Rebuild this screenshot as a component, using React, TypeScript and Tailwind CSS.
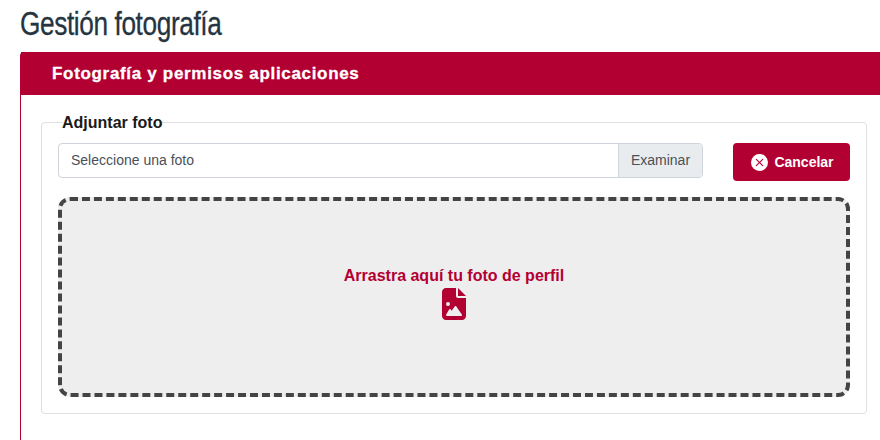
import { BsXCircleFill } from "react-icons/bs";
import { FaFileImage } from "react-icons/fa6";

export default function App() {
  return (
    <div className="h-[440px] w-[880px] overflow-hidden bg-white pl-5 font-['Liberation_Sans',Arial,sans-serif] text-[#212529]">
      <h1 className="h-[52px] origin-left scale-x-[0.795] whitespace-nowrap pt-[4px] text-[33px] leading-[40px] tracking-[-0.5px] text-[#26343f] [-webkit-text-stroke:0.3px_#26343f]">
        Gestión fotografía
      </h1>
      <div className="h-[388px] rounded-tl-[4px] border-l border-[#b30033]">
        <div className="flex h-[43px] items-center bg-[#b30033] pl-[31px] text-[17px] font-bold tracking-[0.68px] text-white [-webkit-text-stroke:0.3px_white]">
          Fotografía y permisos aplicaciones
        </div>
        <div className="pl-[20px] pr-[13px] pt-[17px]">
          <fieldset className="h-[302px] rounded-[4px] border border-[#dfdfdf] pl-4 pr-4">
            <legend className="ml-1 pt-[2px] text-base font-bold leading-[18px] text-[#1a1a1a]">
              Adjuntar foto
            </legend>
            <div className="mt-[11px] flex items-start justify-between">
              <div className="flex h-[35px] w-[645px] rounded-[4px] border border-[#ced4da] text-sm leading-[20px] text-[#495057]">
                <div className="flex flex-1 items-center pb-[2px] pl-3">Seleccione una foto</div>
                <div className="flex w-[84px] items-center justify-center rounded-r-[3px] border-l border-[#ced4da] bg-[#e9ecef] pb-[2px]">
                  Examinar
                </div>
              </div>
              <button className="flex h-[38px] w-[117px] items-center justify-center gap-[6px] rounded-[4px] bg-[#b30033] pl-[2px] text-sm font-bold text-white">
                <BsXCircleFill className="size-[17px]" />
                Cancelar
              </button>
            </div>
            <div className="mt-[16px] flex h-[200px] w-[792px] flex-col items-center justify-center rounded-[12px] border-4 border-dashed border-[#444444] bg-[#eeeeee] pb-[10px] text-base font-bold text-[#b30033]">
              <span className="leading-[24px]">Arrastra aquí tu foto de perfil</span>
              <FaFileImage className="h-8 w-6" />
            </div>
          </fieldset>
        </div>
      </div>
    </div>
  );
}
